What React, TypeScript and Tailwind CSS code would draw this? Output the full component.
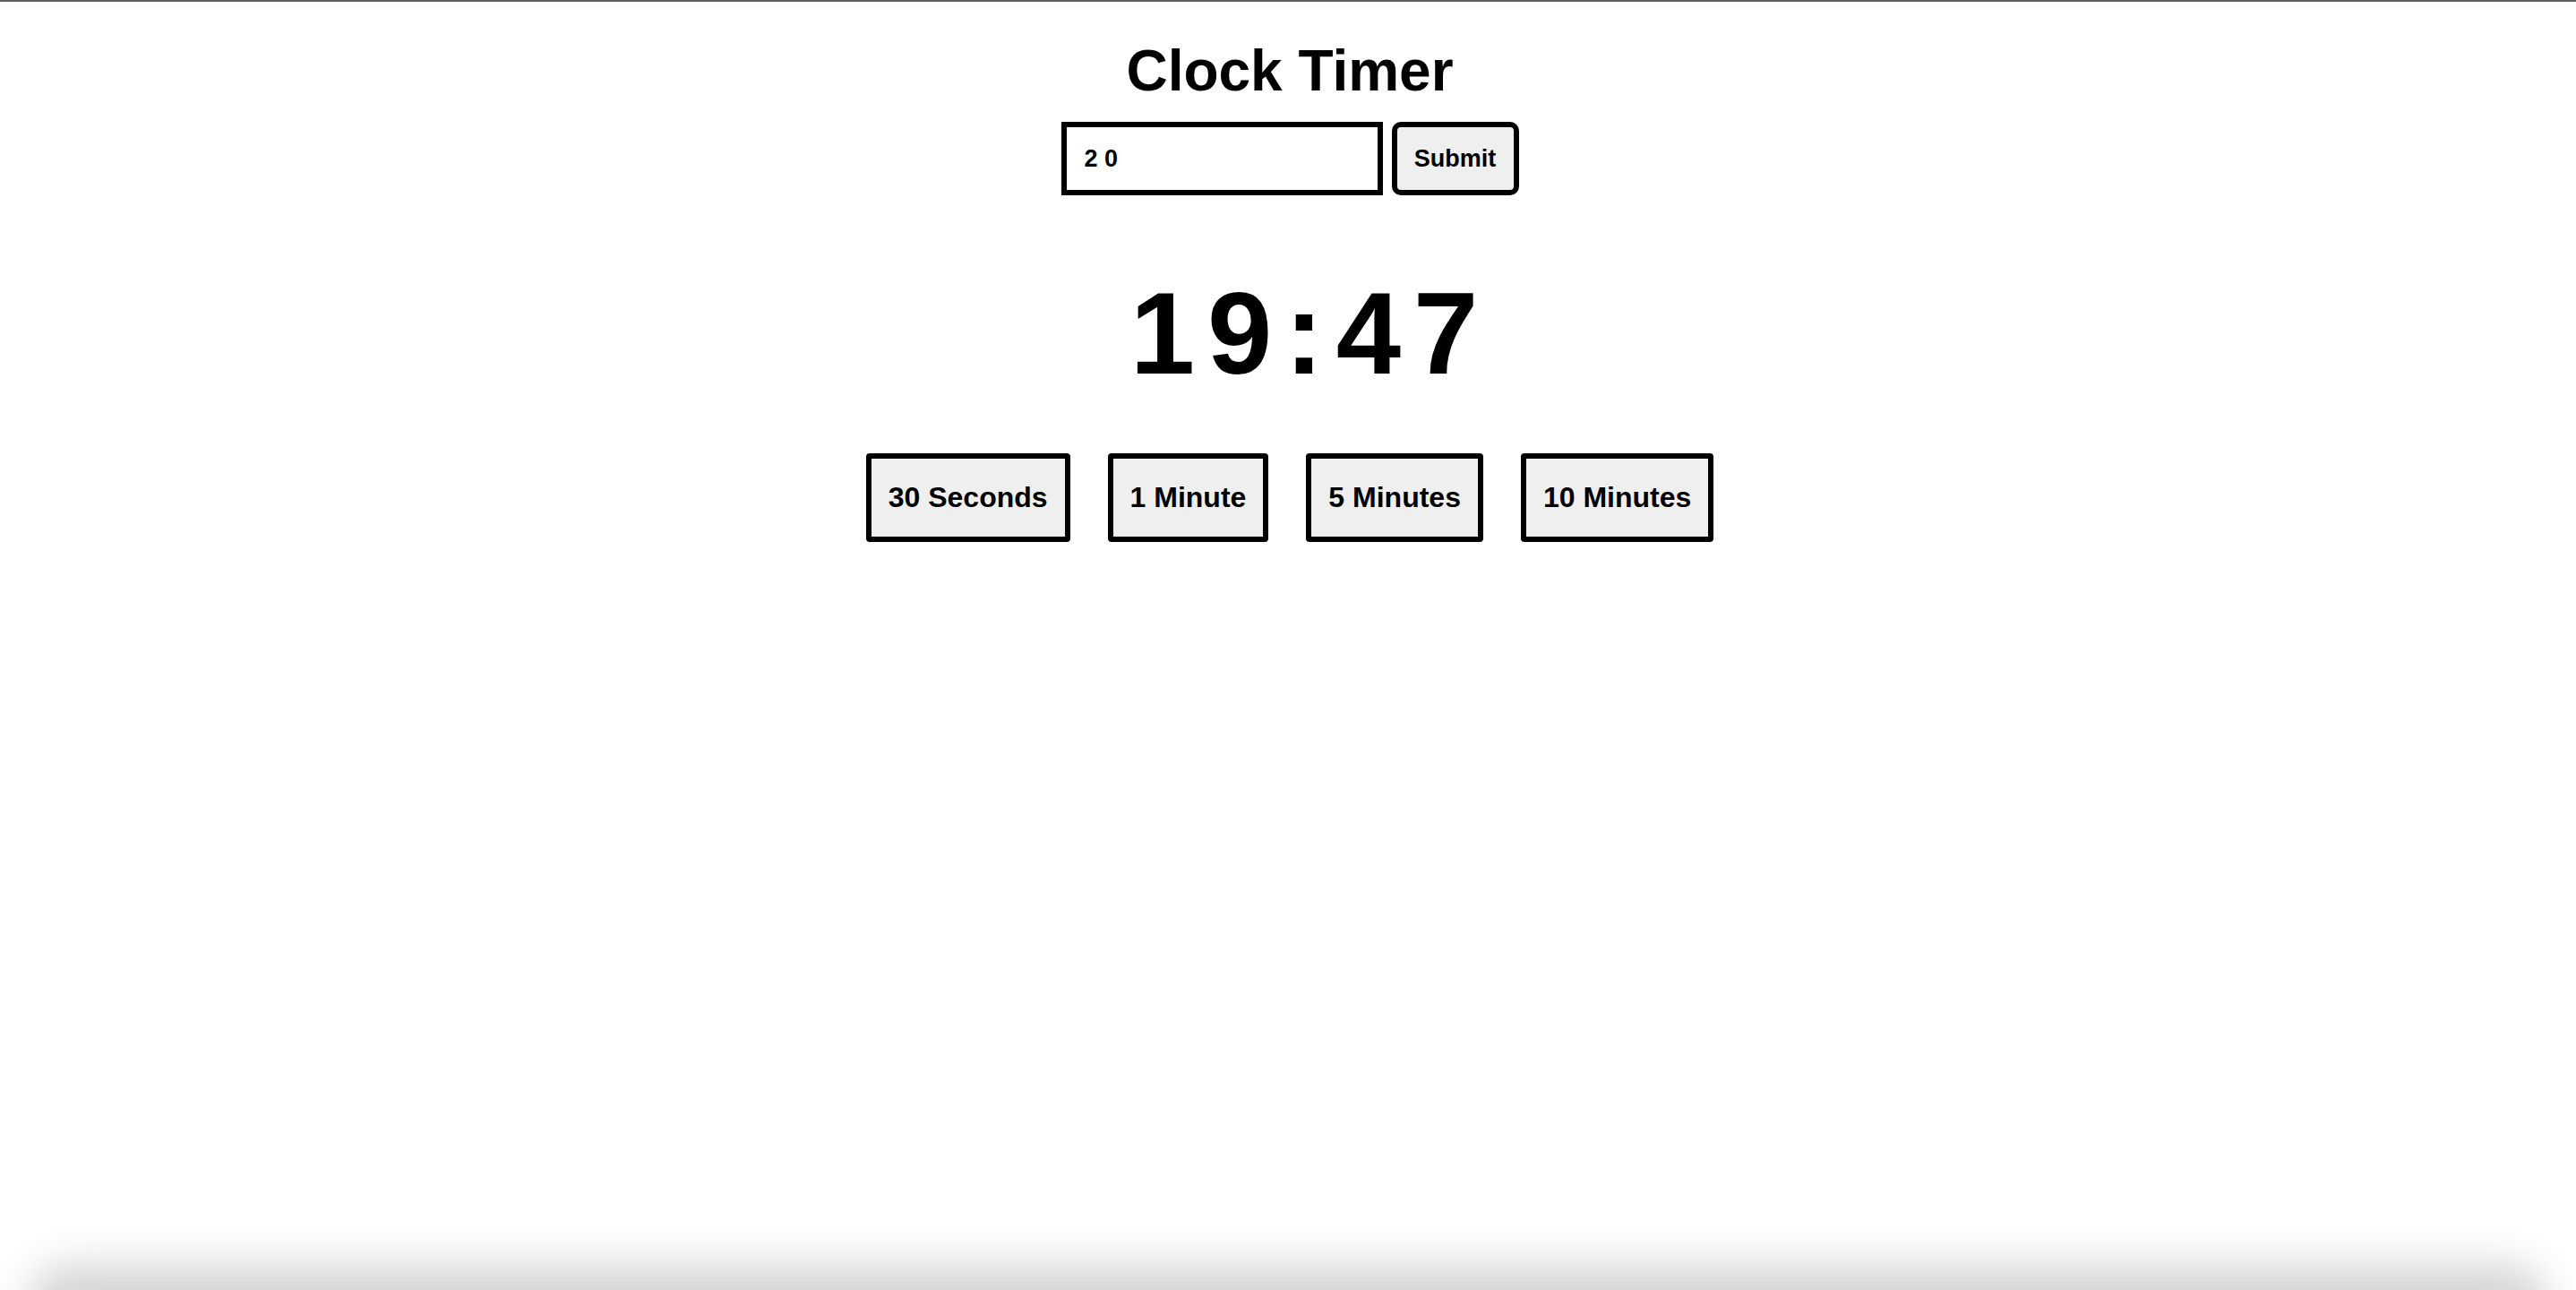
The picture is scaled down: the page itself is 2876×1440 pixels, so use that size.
import React from "react";

export default function App() {
  const presets = ["30 Seconds", "1 Minute", "5 Minutes", "10 Minutes"];
  return (
    <div
      className="relative h-screen w-full overflow-hidden bg-white border-t-2 border-[#5f5f63] text-black"
      style={{ fontFamily: '"Liberation Sans", Arial, Helvetica, sans-serif' }}
    >
      <div className="flex flex-col items-center">
        <h1 className="mt-[40px] ml-[4px] text-[64px] leading-[74px] font-bold">Clock Timer</h1>
        <form
          className="mt-[20px] ml-[4px] flex items-center gap-[10px]"
          onSubmit={(e) => e.preventDefault()}
        >
          <input
            type="text"
            defaultValue="2 0"
            className="h-[82px] w-[359px] border-[6px] border-black bg-white pl-[20px] text-[27px] font-bold outline-none"
          />
          <button
            type="submit"
            className="h-[82px] w-[142px] rounded-[10px] border-[6px] border-black bg-[#efefef] text-[27px] font-bold"
          >
            Submit
          </button>
        </form>
        <div className="mt-[79px] text-[130px] leading-[150px] font-bold tracking-[14px] pl-[50px]">
          19:47
        </div>
        <div className="mt-[59px] ml-[4px] flex gap-[42px]">
          {presets.map((p) => (
            <button
              key={p}
              className="rounded-[4px] border-[6px] border-black bg-[#efefef] px-[19px] py-[25px] text-[32px] leading-[37px] font-bold"
            >
              {p}
            </button>
          ))}
        </div>
      </div>
      <div className="pointer-events-none absolute left-[30px] right-[30px] bottom-[-70px] h-[100px] rounded-full bg-[#d6d6d6] blur-[22px]" />
    </div>
  );
}
